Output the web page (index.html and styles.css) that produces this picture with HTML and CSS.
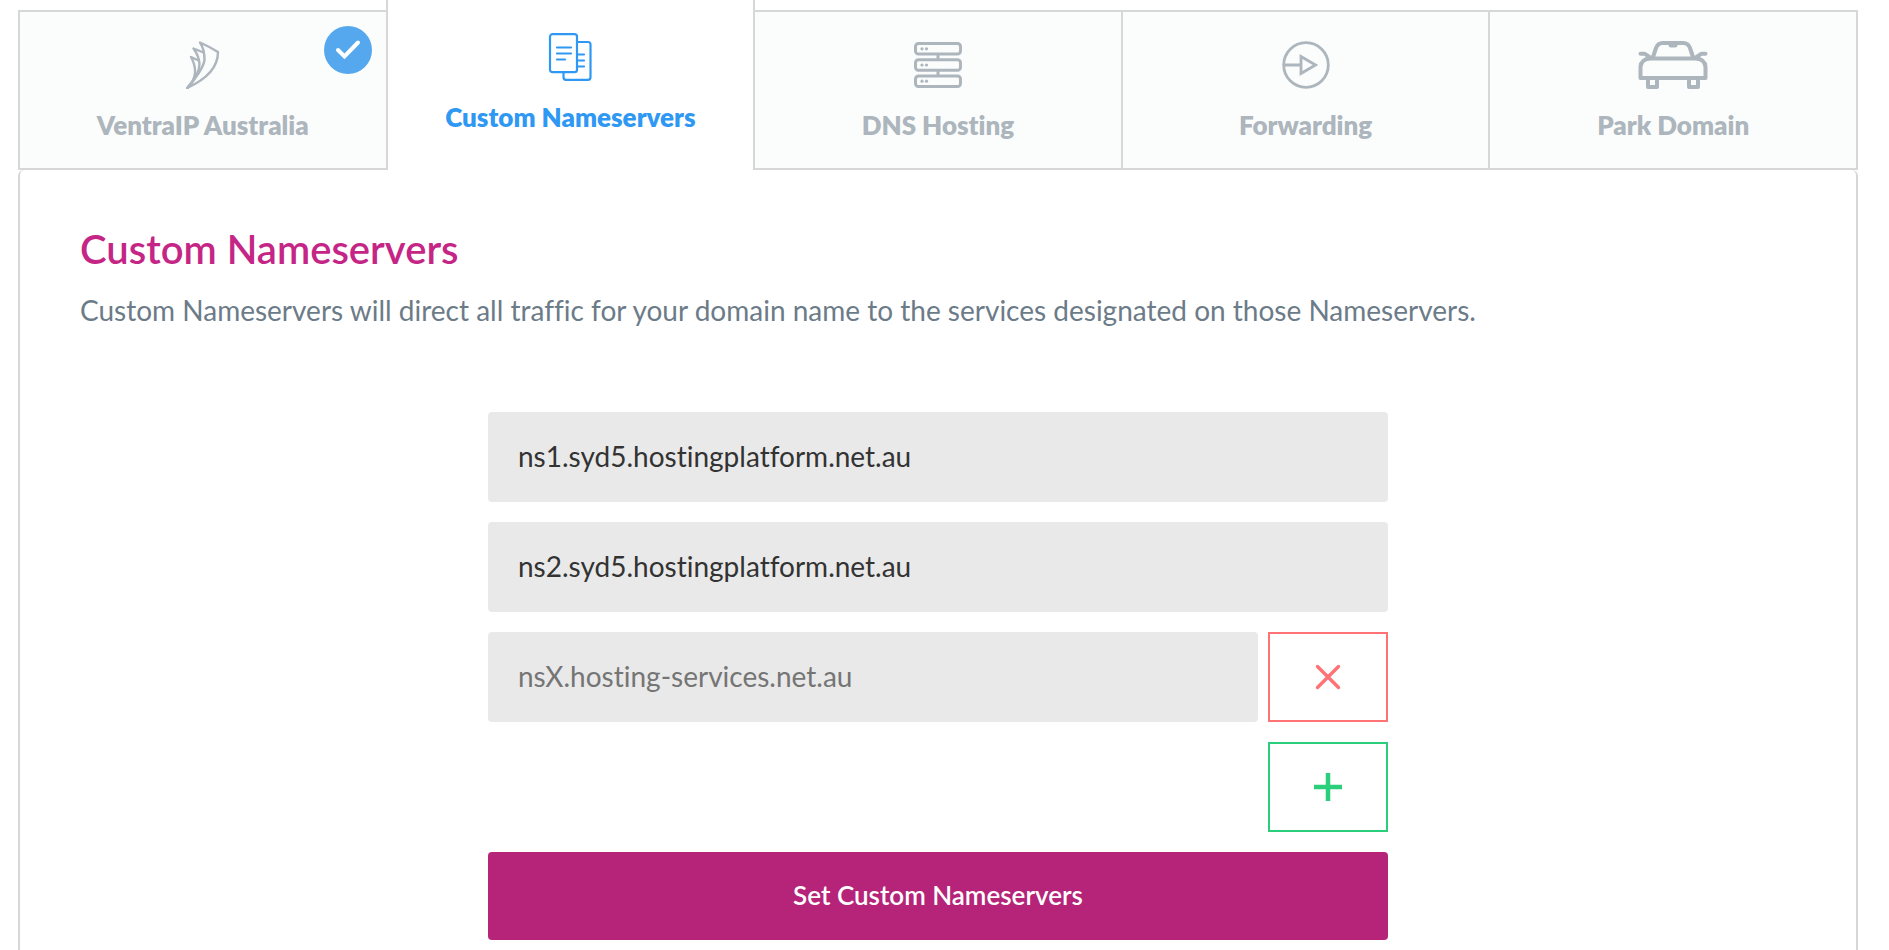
FILE: index.html
```html
<!DOCTYPE html>
<html lang="en">
<head>
<meta charset="utf-8">
<meta name="viewport" content="width=device-width, initial-scale=1">
<title>Custom Nameservers</title>
<link rel="stylesheet" href="styles.css">
</head>
<body>
<nav class="tabs" aria-label="Domain options">
  <button class="tab" type="button">
    <svg class="tab-icon" width="34" height="48" viewBox="0 0 34 48" fill="none" stroke="currentColor" stroke-width="2.400" stroke-linejoin="round" stroke-linecap="round" aria-hidden="true">
      <path d="M14 1.500Q24 6 32 11Q32 33 1 47Q17 29 18.500 19Q18.500 8 14 1.500Z"/>
      <path d="M17.500 11.500L7.500 7.500Q13 15 13.500 23Q13.500 33 2 46.500"/>
      <path d="M11.500 19L5 16Q9.500 24 9 32Q8.500 39 2 46.500"/>
    </svg>
    <span class="tab-label">VentraIP Australia</span>
    <span class="badge">
      <svg width="48" height="48" viewBox="0 0 48 48" fill="none" stroke="#fff" stroke-width="4" stroke-linecap="round" stroke-linejoin="miter" aria-hidden="true"><path d="M14 24L20.500 30.500L34 16.500"/></svg>
    </span>
  </button>
  <button class="tab tab-active" type="button" aria-current="page">
    <svg class="tab-icon" width="44" height="48" viewBox="0 0 44 48" fill="none" stroke="currentColor" stroke-width="2.200" stroke-linecap="round" aria-hidden="true">
      <rect x="2" y="1.200" width="27" height="38" rx="2.500"/>
      <path d="M29 9H40Q42.500 9 42.500 11.500V44.300Q42.500 46.800 40 46.800H18Q15.500 46.800 15.500 44.300V39"/>
      <path d="M9 14.500H23M9 20.500H23M9 26.500H17M30 21.500H36M30 27.500H36M30 33.500H36"/>
    </svg>
    <span class="tab-label">Custom Nameservers</span>
  </button>
  <button class="tab" type="button">
    <svg class="tab-icon" width="48" height="48" viewBox="0 0 48 48" fill="none" stroke="currentColor" stroke-width="3" aria-hidden="true">
      <rect x="1.500" y="2.500" width="45" height="10.500" rx="3"/>
      <rect x="1.500" y="18.700" width="45" height="10.500" rx="3"/>
      <rect x="1.500" y="35" width="45" height="10.500" rx="3"/>
      <path d="M24 13V19M24 29V35"/>
      <g fill="currentColor" stroke="none"><circle cx="8" cy="7.800" r="1.600"/><circle cx="12.500" cy="7.800" r="1.600"/><circle cx="8" cy="24" r="1.600"/><circle cx="12.500" cy="24" r="1.600"/><circle cx="8" cy="40.200" r="1.600"/><circle cx="12.500" cy="40.200" r="1.600"/></g>
    </svg>
    <span class="tab-label">DNS Hosting</span>
  </button>
  <button class="tab" type="button">
    <svg class="tab-icon" width="48" height="48" viewBox="0 0 48 48" fill="none" stroke="currentColor" stroke-width="2.800" aria-hidden="true">
      <circle cx="24" cy="24" r="22.300"/>
      <path d="M2 24H19M19 15.500V32.500L33.500 24Z"/>
    </svg>
    <span class="tab-label">Forwarding</span>
  </button>
  <button class="tab" type="button">
    <svg class="tab-icon" width="70" height="48" viewBox="0 0 69 48" fill="none" stroke="currentColor" stroke-width="4" stroke-linecap="round" stroke-linejoin="round" aria-hidden="true">
      <path d="M14.500 16L17.500 7Q19.500 2 24 2H45Q49.500 2 51.500 7L54.500 16"/>
      <path d="M2 37V26Q2.500 18 12 17.500H57Q66.500 18 67 26V37Z"/>
      <path d="M2 12.700H6L11 16M67 12.700H63L58 16"/>
      <path d="M9.500 38V46H18.500V38M50.500 38V46H59.500V38"/>
      <path d="M32.500 4H36.500" stroke-width="5"/>
    </svg>
    <span class="tab-label">Park Domain</span>
  </button>
</nav>
<main class="panel">
  <h1 class="title">Custom Nameservers</h1>
  <p class="intro">Custom Nameservers will direct all traffic for your domain name to the services designated on those Nameservers.</p>
  <form class="form">
    <input class="field" type="text" aria-label="Nameserver 1" value="ns1.syd5.hostingplatform.net.au">
    <input class="field" type="text" aria-label="Nameserver 2" value="ns2.syd5.hostingplatform.net.au">
    <div class="row">
      <input class="field" type="text" aria-label="Nameserver 3" placeholder="nsX.hosting-services.net.au">
      <button class="square remove" type="button" aria-label="Remove nameserver">
        <svg width="28" height="28" viewBox="0 0 28 28" fill="none" stroke="currentColor" stroke-width="3.400" stroke-linecap="round" aria-hidden="true"><path d="M3.500 3.500L24.500 24.500M24.500 3.500L3.500 24.500"/></svg>
      </button>
    </div>
    <button class="square add" type="button" aria-label="Add nameserver">
      <svg width="28" height="28" viewBox="0 0 28 28" fill="none" stroke="currentColor" stroke-width="4.500" aria-hidden="true"><path d="M14 0V28M0 14H28"/></svg>
    </button>
    <button class="submit" type="submit">Set Custom Nameservers</button>
  </form>
</main>
</body>
</html>
```
FILE: styles.css
```css
* {
  box-sizing: border-box;
}

body {
  display: flex;
  flex-direction: column;
  min-height: 100vh;
  margin: 0;
  padding: 10px 31px 0 18px;
  background: #fff;
  font-family: Lato, "Open Sans", sans-serif;
  font-variant-ligatures: none;
}

button,
input {
  font-family: inherit;
  font-variant-ligatures: none;
}

button {
  cursor: pointer;
}

.tabs {
  display: grid;
  grid-template-columns: repeat(5, 1fr);
  padding-left: 2px;
}

.tab {
  position: relative;
  display: flex;
  flex-direction: column;
  align-items: center;
  gap: 20px;
  margin: 0 0 0 -2px;
  padding: 29px 0 27px;
  border: 2px solid #d6d7d7;
  background: #fbfdfc;
  color: #adb5bd;
}

.tab-active {
  margin-top: -10px;
  padding: 33px 0 37px;
  border-width: 0 2px;
  background: #fff;
  color: #2f98f3;
}

.tab-icon {
  display: block;
}

.tab-label {
  font-size: 26px;
  font-weight: 800;
  line-height: 32px;
}

.badge {
  position: absolute;
  top: 14px;
  right: 14px;
  height: 48px;
  border-radius: 50%;
  background: #55a8ee;
}

.panel {
  flex: 1;
  padding: 55px 60px 10px;
  border: solid #d6d7d7;
  border-width: 0 2px;
  border-radius: 6px 6px 0 0;
}

.title {
  margin: 0;
  color: #c52686;
  font-size: 40px;
  font-weight: 600;
  line-height: 48px;
}

.intro {
  margin: 20px 0 85px;
  color: #6c7b88;
  font-size: 28px;
  line-height: 34px;
}

.form {
  display: flex;
  flex-direction: column;
  gap: 20px;
  max-width: 900px;
  margin: 0 auto;
}

.row {
  display: flex;
  gap: 10px;
}

.field {
  flex: 1;
  width: 100%;
  min-width: 0;
  padding: 27px 30px 29px;
  border: 0;
  border-radius: 4px;
  background: #e9e9e9;
  color: #333;
  font-size: 28px;
  line-height: 34px;
}

.field::placeholder {
  color: #757575;
  opacity: 1;
}

.square {
  display: flex;
  align-items: center;
  justify-content: center;
  width: 120px;
  height: 90px;
  padding: 0;
  border: 2px solid currentColor;
  background: #fff;
}

.remove {
  color: #ff7375;
}

.add {
  align-self: flex-end;
  color: #2bce7a;
}

.submit {
  padding: 27px 30px 29px;
  border: 0;
  border-radius: 4px;
  background: #b52478;
  color: #fff;
  font-size: 26px;
  font-weight: 600;
  line-height: 32px;
}
```
